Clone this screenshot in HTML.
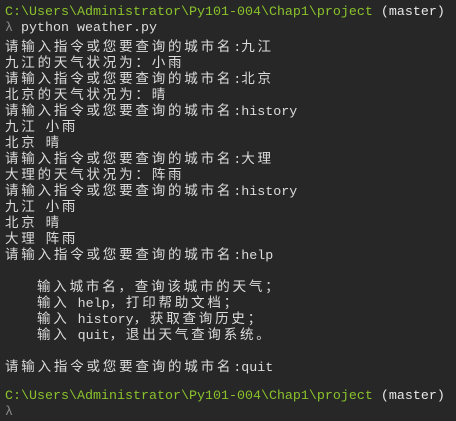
<!DOCTYPE html>
<html><head><meta charset="utf-8"><style>
html,body{margin:0;padding:0;background:#272727;width:456px;height:408px;overflow:hidden}
#t{position:absolute;left:5px;top:5px;font-family:"Liberation Mono","Noto Sans CJK SC",monospace;font-size:13.33px;color:#dcdcdc}
#t div{height:16px;line-height:16px;white-space:pre;overflow:visible}
.c{font-family:"Noto Sans CJK SC",sans-serif;font-size:13.5px;letter-spacing:2.8px;line-height:16px}
.g{color:#8ac22c}.w{color:#e8e8e8}.l{color:#8a8a8a}
</style></head><body>
<div id="t">
<div><span class="g">C:\Users\Administrator\Py101-004\Chap1\project</span> <span class="w">(master)</span></div>
<div><span class="l">λ</span> python weather.py</div>
<div><span class="c">请输入指令或您要查询的城市名</span>:<span class="c">九江</span></div>
<div><span class="c">九江的天气状况为：小雨</span></div>
<div><span class="c">请输入指令或您要查询的城市名</span>:<span class="c">北京</span></div>
<div><span class="c">北京的天气状况为：晴</span></div>
<div><span class="c">请输入指令或您要查询的城市名</span>:history</div>
<div><span class="c">九江</span> <span class="c">小雨</span></div>
<div><span class="c">北京</span> <span class="c">晴</span></div>
<div><span class="c">请输入指令或您要查询的城市名</span>:<span class="c">大理</span></div>
<div><span class="c">大理的天气状况为：阵雨</span></div>
<div><span class="c">请输入指令或您要查询的城市名</span>:history</div>
<div><span class="c">九江</span> <span class="c">小雨</span></div>
<div><span class="c">北京</span> <span class="c">晴</span></div>
<div><span class="c">大理</span> <span class="c">阵雨</span></div>
<div><span class="c">请输入指令或您要查询的城市名</span>:help</div>
<div> </div>
<div>    <span class="c">输入城市名，查询该城市的天气；</span></div>
<div>    <span class="c">输入</span> help<span class="c">，打印帮助文档；</span></div>
<div>    <span class="c">输入</span> history<span class="c">，获取查询历史；</span></div>
<div>    <span class="c">输入</span> quit<span class="c">，退出天气查询系统。</span></div>
<div> </div>
<div><span class="c">请输入指令或您要查询的城市名</span>:quit</div>
<div> </div>
<div><span class="g">C:\Users\Administrator\Py101-004\Chap1\project</span> <span class="w">(master)</span></div>
<div><span class="l">λ</span></div>
</div>
</body></html>
